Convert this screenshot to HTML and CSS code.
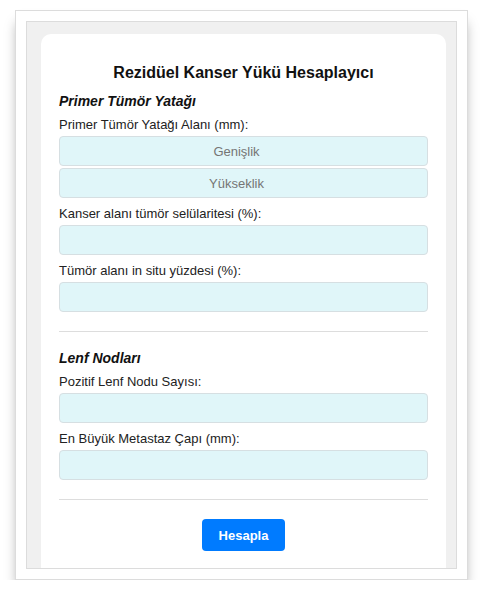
FILE: index.html
```html
<!DOCTYPE html>
<html lang="tr">
<head>
<meta charset="utf-8">
<title>Rezidüel Kanser Yükü Hesaplayıcı</title>
<link rel="stylesheet" href="styles.css">
</head>
<body>
<div class="frame">
  <div class="viewport">
    <div class="card">
      <h2 class="title">Rezidüel Kanser Yükü Hesaplayıcı</h2>
      <h3 class="section">Primer Tümör Yatağı</h3>
      <label class="label">Primer Tümör Yatağı Alanı (mm):</label>
      <input class="field field-tight" type="text" placeholder="Genişlik">
      <input class="field" type="text" placeholder="Yükseklik">
      <label class="label">Kanser alanı tümör selülaritesi (%):</label>
      <input class="field" type="text">
      <label class="label">Tümör alanı in situ yüzdesi (%):</label>
      <input class="field field-last" type="text">
      <hr class="rule">
      <h3 class="section">Lenf Nodları</h3>
      <label class="label">Pozitif Lenf Nodu Sayısı:</label>
      <input class="field" type="text">
      <label class="label">En Büyük Metastaz Çapı (mm):</label>
      <input class="field field-last" type="text">
      <hr class="rule">
      <div class="actions"><button class="btn" type="button">Hesapla</button></div>
    </div>
  </div>
</div>
</body>
</html>
```
FILE: styles.css
```css
* { box-sizing: border-box; }
html, body { margin: 0; padding: 0; background: #fff; }
body { font-family: "Liberation Sans", Arial, sans-serif; color: #111; }

.frame {
  margin: 10px 0 0 15px;
  width: 453px;
  height: 570px;
  border: 1px solid #dcdcdc;
  background: #fff;
  padding: 10px;
  box-shadow: 0 10px 12px -3px rgba(0,0,0,0.38);
}
.viewport {
  height: 548px;
  border: 1px solid #dcdcdc;
  background: #f0f0f0;
  padding: 12px 10px 0 14px;
  overflow: hidden;
}
.card {
  background: #fff;
  border-radius: 10px 10px 0 0;
  padding: 30px 18px 40px;
  display: flex;
  flex-direction: column;
}
.title {
  margin: 0 0 11px;
  font-size: 16px;
  line-height: 18px;
  font-weight: bold;
  text-align: center;
  color: #111;
}
.section {
  margin: 0 0 7px;
  font-size: 14px;
  line-height: 17px;
  font-weight: bold;
  font-style: italic;
  color: #111;
}
.label {
  display: block;
  font-size: 13px;
  line-height: 15px;
  color: #222;
  margin-bottom: 4px;
}
.field {
  display: block;
  width: 100%;
  height: 30px;
  margin: 0 0 8px;
  border: 1px solid #d6dfe2;
  border-radius: 4px;
  background: #e0f6f9;
  font-family: "Liberation Sans", Arial, sans-serif;
  font-size: 13px;
  text-align: center;
  color: #333;
  padding: 0 15px 0 1px;
}
.field::placeholder { color: #757575; }
.field-tight { margin-bottom: 2px; }
.field-last { margin-bottom: 0; }
.rule {
  border: 0;
  border-top: 1px solid #dddddd;
  margin: 19px 0 18px;
  height: 0;
}
.actions { display: flex; justify-content: center; margin-top: 1px; }
.btn {
  width: 83px;
  height: 32px;
  border: 0;
  border-radius: 4px;
  background: #007bff;
  color: #fff;
  font-family: "Liberation Sans", Arial, sans-serif;
  font-size: 13px;
  font-weight: bold;
}
```
